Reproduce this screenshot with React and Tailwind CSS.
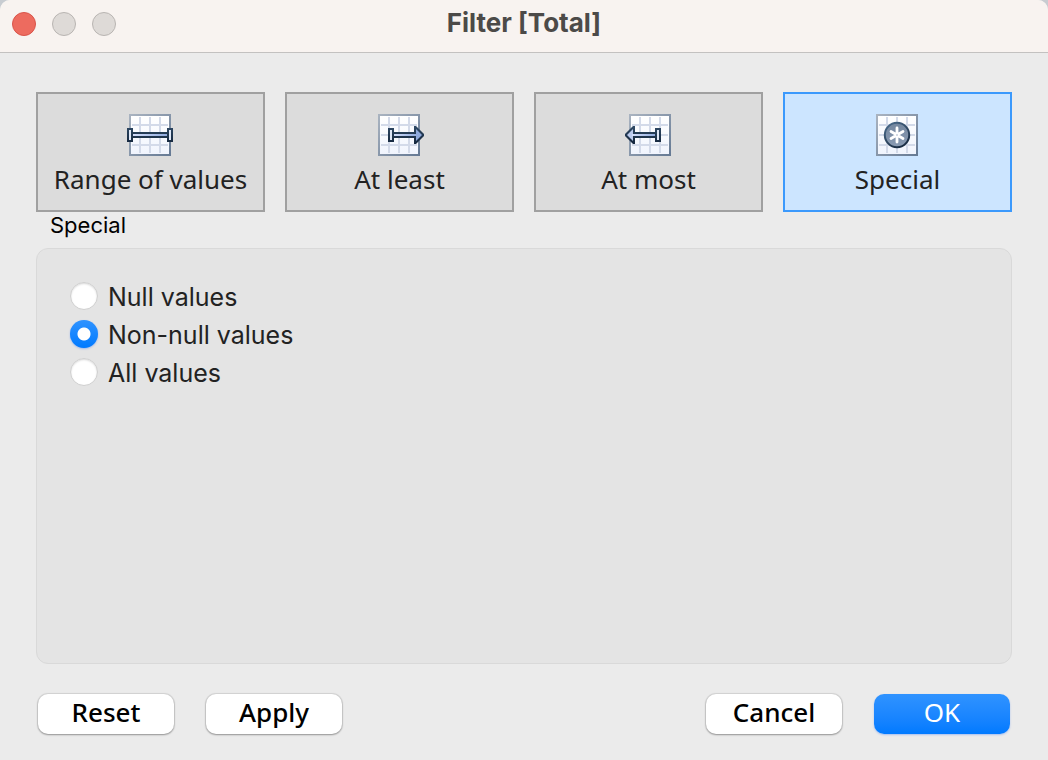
import { useState } from "react";

function Grid({ x, id }) {
  return (
    <g>
      <defs>
        <linearGradient id={id + "-frame"} x1="0" y1="0" x2="1" y2="1">
          <stop offset="0" stopColor="#a9b3c0" />
          <stop offset="1" stopColor="#667a94" />
        </linearGradient>
        <linearGradient id={id + "-paper"} x1="0" y1="0" x2="0" y2="1">
          <stop offset="0" stopColor="#ffffff" />
          <stop offset="1" stopColor="#f0f4fd" />
        </linearGradient>
        <linearGradient id={id + "-bar"} x1="0" y1="0" x2="1" y2="0">
          <stop offset="0" stopColor="#d4defa" />
          <stop offset="1" stopColor="#8ea9dc" />
        </linearGradient>
        <linearGradient id={id + "-dark"} gradientUnits="userSpaceOnUse" x1="0" y1="14" x2="0" y2="32">
          <stop offset="0" stopColor="#2f4a66" />
          <stop offset="1" stopColor="#14263c" />
        </linearGradient>
        <linearGradient id={id + "-rim"} gradientUnits="userSpaceOnUse" x1="14" y1="10" x2="30" y2="36">
          <stop offset="0" stopColor="#4b6c8c" />
          <stop offset="1" stopColor="#14263c" />
        </linearGradient>
        <linearGradient id={id + "-disc"} x1="0" y1="0" x2="0" y2="1">
          <stop offset="0" stopColor="#74879f" />
          <stop offset="1" stopColor="#8a9bb3" />
        </linearGradient>
      </defs>
      <rect x={x + 1} y="3" width="40" height="40" fill={`url(#${id}-paper)`} stroke={`url(#${id}-frame)`} strokeWidth="2" />
      {[11, 21, 31].map((o) => (
        <path key={o} d={`M${x + o} 5V41M${x + 3} ${o + 2}H${x + 39}`} stroke="#d3dae9" strokeWidth="2" />
      ))}
    </g>
  );
}

function Cap({ x, id }) {
  return (
    <g>
      <rect x={x} y="16" width="6" height="14" fill={`url(#${id}-dark)`} />
      <rect x={x + 2} y="18" width="2" height="10" fill="#dfe8f8" />
    </g>
  );
}

function RangeIcon() {
  return (
    <svg width="48" height="48" viewBox="0 0 48 48" aria-hidden="true">
      <Grid x={2} id="range" />
      <rect x="5" y="20" width="36" height="6" fill="url(#range-dark)" />
      <rect x="5" y="22" width="36" height="2" fill="url(#range-bar)" />
      <Cap x={0} id="range" />
      <Cap x={40} id="range" />
    </svg>
  );
}

function AtLeastIcon() {
  return (
    <svg width="48" height="48" viewBox="0 0 48 48" aria-hidden="true">
      <Grid x={2} id="least" />
      <rect x="17" y="20" width="22" height="6" fill="url(#least-dark)" />
      <path d="M38 14H40L48 22V24L40 32H38Z" fill="url(#least-dark)" />
      <path d="M40 17L46 23L40 29Z" fill="#8ea9dc" />
      <rect x="17" y="22" width="24" height="2" fill="url(#least-bar)" />
      <Cap x={12} id="least" />
    </svg>
  );
}

function AtMostIcon() {
  return (
    <svg width="48" height="48" viewBox="0 0 48 48" aria-hidden="true">
      <Grid x={4} id="most" />
      <rect x="9" y="20" width="22" height="6" fill="url(#most-dark)" />
      <path d="M10 14H8L0 22V24L8 32H10Z" fill="url(#most-dark)" />
      <path d="M8 17L2 23L8 29Z" fill="#bccbee" />
      <rect x="7" y="22" width="24" height="2" fill="url(#most-bar)" />
      <Cap x={30} id="most" />
    </svg>
  );
}

function SpecialIcon() {
  return (
    <svg width="48" height="48" viewBox="0 0 48 48" aria-hidden="true">
      <Grid x={2} id="special" />
      <circle cx="23" cy="23" r="12.2" fill="url(#special-disc)" stroke="url(#special-rim)" strokeWidth="2" />
      <path d="M23 16V30M17 19.5L29 26.5M17 26.5L29 19.5" stroke="#fff" strokeWidth="2.8" strokeLinecap="round" />
      <circle cx="23" cy="23" r="1" fill="#c5cedb" />
    </svg>
  );
}

const modes = [
  { name: "Range of values", Icon: RangeIcon },
  { name: "At least", Icon: AtLeastIcon },
  { name: "At most", Icon: AtMostIcon },
  { name: "Special", Icon: SpecialIcon },
];

const options = ["Null values", "Non-null values", "All values"];

const pushButton =
  "h-10 w-[136px] rounded-[10px] pb-1 font-['Noto_Sans',sans-serif] text-[26px] leading-9";
const plainButton =
  "bg-white font-medium text-black shadow-[0_0_1px_1px_rgba(0,0,0,0.1),0_1px_2px_rgba(0,0,0,0.3)]";

export default function App() {
  const [mode, setMode] = useState("Special");
  const [option, setOption] = useState("Non-null values");

  return (
    <div className="min-h-screen bg-[#c8ccd1]">
      <main className="flex min-h-screen flex-col overflow-hidden rounded-t-[10px] bg-[#ebebeb] font-[Inter,sans-serif]">
        <header className="grid h-[53px] shrink-0 grid-cols-[1fr_auto_1fr] items-center border-b border-[#c3c1c0] bg-[#f8f3f0] px-3 pb-1">
          <div className="flex gap-4">
            <button aria-label="Close" className="size-6 rounded-full border border-[#d9544a] bg-[#ed6b5f]" />
            <button aria-label="Minimize" className="size-6 rounded-full border border-[#b9b5b2] bg-[#dedad7]" />
            <button aria-label="Zoom" className="size-6 rounded-full border border-[#b9b5b2] bg-[#dedad7]" />
          </div>
          <h1 className="pb-[2px] text-[26px] leading-8 font-bold text-[#4c4a48]">Filter [Total]</h1>
        </header>

        <div className="flex flex-1 flex-col px-9 pt-[39px] pb-[26px]">
          <div className="grid grid-cols-4 gap-5">
            {modes.map(({ name, Icon }) => (
              <button
                key={name}
                aria-pressed={mode === name}
                onClick={() => setMode(name)}
                className={
                  "flex h-[120px] flex-col items-center border-2 pt-[18px] font-['Noto_Sans',sans-serif] text-[26px] leading-[38px] whitespace-nowrap text-[#222] " +
                  (mode === name ? "border-[#3b99fc] bg-[#cce5ff]" : "border-[#a0a0a0] bg-[#dcdcdc]")
                }
              >
                <Icon />
                {name}
              </button>
            ))}
          </div>

          <section aria-labelledby="mode-title" className="flex flex-1 flex-col">
            <h2 id="mode-title" className="h-9 px-[14px] text-[22px] leading-[26px] text-black">{mode}</h2>
            <div role="radiogroup" aria-labelledby="mode-title" className="flex flex-1 flex-col rounded-xl border border-[#d9d9d9] bg-[#e4e4e4] px-[33px] py-7">
              {options.map((name) => (
                <label key={name} className="flex h-[38px] items-center gap-[10px] text-[25px] leading-8 text-[#222]">
                  <input
                    type="radio"
                    name="special"
                    checked={option === name}
                    onChange={() => setOption(name)}
                    className="size-7 appearance-none rounded-full border border-[#cfcfcf] bg-white shadow-[inset_0_1px_2px_rgba(0,0,0,0.15)] checked:border-0 checked:bg-[radial-gradient(circle,#fff_6px,transparent_7px),linear-gradient(#2f93ff,#007aff)] checked:shadow-[0_1px_2px_rgba(0,90,255,0.3)]"
                  />
                  <span className="pt-[2px]">{name}</span>
                </label>
              ))}
            </div>
          </section>

          <footer className="flex justify-between px-[2px] pt-[30px]">
            <div className="flex gap-8">
              <button className={pushButton + " " + plainButton}>Reset</button>
              <button className={pushButton + " " + plainButton}>Apply</button>
            </div>
            <div className="flex gap-8">
              <button className={pushButton + " " + plainButton}>Cancel</button>
              <button className={pushButton + " bg-linear-to-b from-[#2f93ff] to-[#007aff] text-white shadow-[0_1px_2px_rgba(0,90,255,0.3)]"}>
                OK
              </button>
            </div>
          </footer>
        </div>
      </main>
    </div>
  );
}
